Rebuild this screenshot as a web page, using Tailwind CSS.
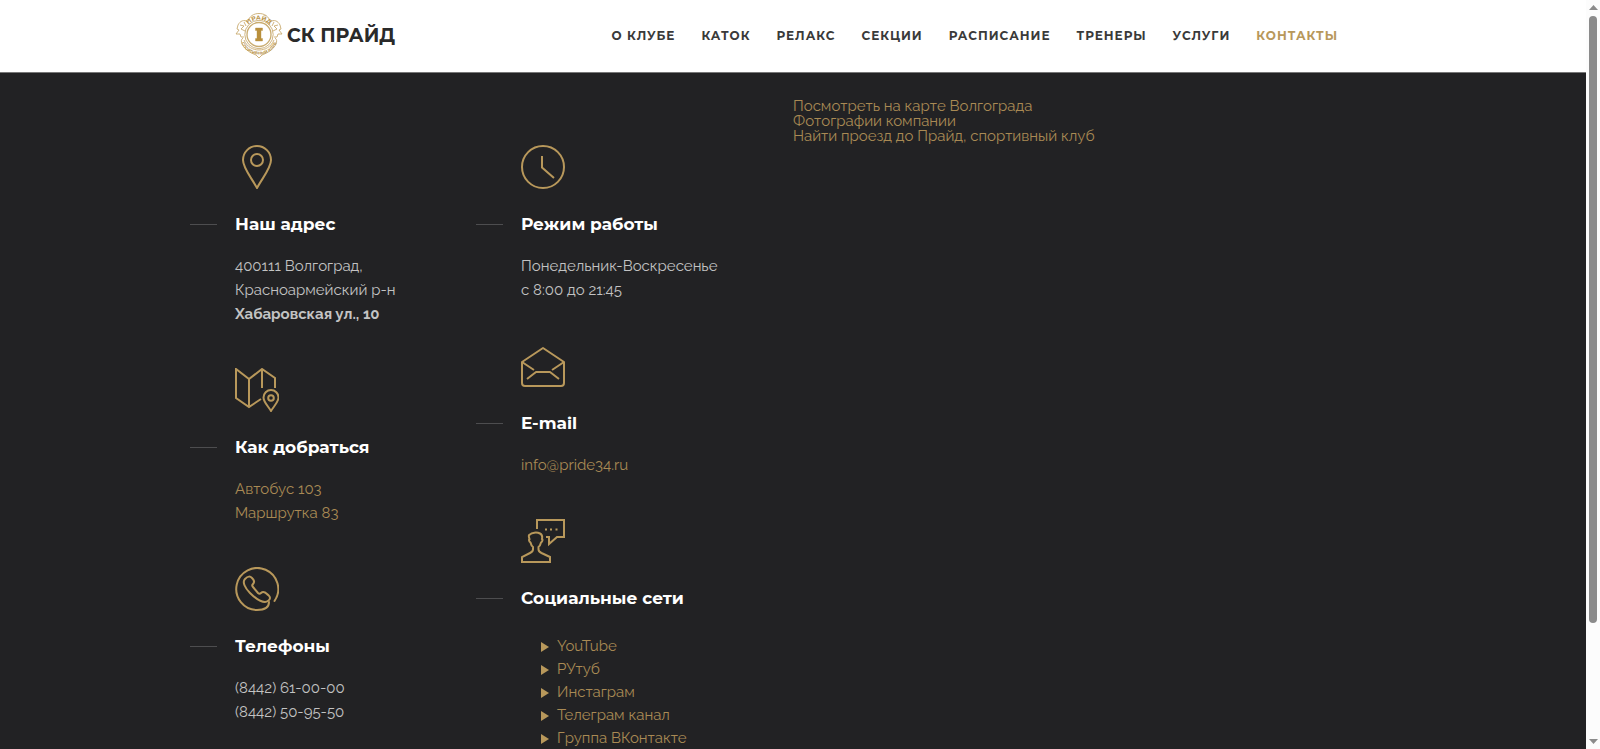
<!DOCTYPE html>
<html lang="ru">
<head>
  <meta charset="UTF-8">
  <meta name="viewport" content="width=device-width, initial-scale=1.0">
  <title>Контакты | СК Прайд</title>
  <script src="https://cdn.jsdelivr.net/npm/@tailwindcss/browser@4"></script>
</head>
<body class="flex h-screen overflow-hidden bg-[#222224] font-['Raleway','Open_Sans',sans-serif] text-[15px] leading-6 text-[#c3c3c3]">

  <div class="min-w-0 flex-1">
    <!-- Header -->
    <header class="border-b border-[#777] bg-white font-['Montserrat','Inter',sans-serif]">
      <div class="mx-auto flex h-[72px] max-w-[1146px] items-center justify-between px-[15px]">
        <a href="#" class="flex items-center gap-1 text-[19px] font-bold text-[#2a2a2a]">
          <svg class="h-12 w-12" viewBox="0 0 48 48" fill="none" stroke="#c9ac70" stroke-width=".9">
            <circle cx="24" cy="22.500" r="14.200"/>
            <circle cx="24" cy="22.500" r="12" stroke-width="1.300"/>
            <path d="M13 10C14 4 19 1.500 24 1.500S34 4 35 10"/>
            <path d="M13 10C9 7 5 9 3 13l-1 4 2 1-3 4 4 0 1 3 3 0M5 13l4 1-3 3 4 2M9 10l2 4M35 10c4-3 8-1 10 3l1 4-2 1 3 4-4 0-1 3-3 0M43 13l-4 1 3 3-4 2M39 10l-2 4"/>
            <path d="M8 26c-2 1-2 4-1 6 3 6 9 9 14 11l3 3 3-3c5-2 11-5 14-11 1-2 1-5-1-6"/>
            <path d="M9 28c3 7 9 10 15 10s12-3 15-10"/>
            <path id="logo-top" d="M12 14.500a14 14 0 0 1 24 0" stroke="none"/>
            <path id="logo-bottom" d="M6.500 31C10 38.500 16 42.500 24 42.500S38 38.500 41.500 31" stroke="none"/>
            <g fill="#b8934a" stroke="none" font-weight="700" text-anchor="middle">
              <text font-size="6"><textPath href="#logo-top" startOffset="50%">ПРАЙД</textPath></text>
              <text font-size="4"><textPath href="#logo-bottom" startOffset="50%">СПОРТИВНЫЙ КЛУБ</textPath></text>
            </g>
            <path d="M20.500 16h7v2.500H26v8h1.500V29h-7v-2.500H22v-8h-1.500z" fill="#b98f3c" stroke="#b98f3c" stroke-width=".4"/>
          </svg>
          <span>СК ПРАЙД</span>
        </a>
        <nav class="flex gap-[26px] pr-[13px] text-[12px] font-bold tracking-[1px] text-[#3a3a3a]">
          <a href="#">О КЛУБЕ</a>
          <a href="#">КАТОК</a>
          <a href="#">РЕЛАКС</a>
          <a href="#">СЕКЦИИ</a>
          <a href="#">РАСПИСАНИЕ</a>
          <a href="#">ТРЕНЕРЫ</a>
          <a href="#">УСЛУГИ</a>
          <a href="#" class="text-[#b8985b]">КОНТАКТЫ</a>
        </nav>
      </div>
    </header>

    <main class="grid grid-cols-2">
      <!-- Contacts -->
      <div class="ml-auto grid w-full max-w-[573px] grid-cols-[1fr_287px] pt-[72px]">
        <div class="flex flex-col gap-[42px] pl-[15px]">
          <section>
            <svg class="h-11 w-11" viewBox="0 0 44 44" fill="none" stroke="#b8985b" stroke-width="2">
              <path d="M22 43C16 32 8 23 8 15a14 14 0 0 1 28 0c0 8-8 17-14 28z"/>
              <circle cx="22" cy="15" r="6"/>
            </svg>
            <h4 class="relative mt-[23px] font-['Montserrat','Inter',sans-serif] text-[17px] font-bold leading-6 text-white before:absolute before:top-3 before:-left-[45px] before:h-px before:w-[27px] before:bg-[#4d4d4f]">Наш адрес</h4>
            <p class="mt-[18px]">400111 Волгоград,<br>Красноармейский р-н<br><b>Хабаровская ул., 10</b></p>
          </section>

          <section>
            <svg class="h-11 w-11" viewBox="0 0 44 44" fill="none" stroke="#b8985b" stroke-width="2">
              <path d="M26 31l-12 8L1 30V1l13 10L27 1l13 9v10M14 11v28M27 1v19"/>
              <path d="M36 43c-3-5-7.500-9-7.500-13.500a7.500 7.500 0 0 1 15 0C43.500 34 39 38 36 43z"/>
              <circle cx="36" cy="30" r="2.800"/>
            </svg>
            <h4 class="relative mt-[23px] font-['Montserrat','Inter',sans-serif] text-[17px] font-bold leading-6 text-white before:absolute before:top-3 before:-left-[45px] before:h-px before:w-[27px] before:bg-[#4d4d4f]">Как добраться</h4>
            <p class="mt-[18px] text-[#a98a54]"><a href="#">Автобус 103</a><br><a href="#">Маршрутка 83</a></p>
          </section>

          <section>
            <svg class="h-11 w-11" viewBox="0 0 44 44" fill="none" stroke="#b8985b" stroke-width="2" stroke-linecap="round" stroke-linejoin="round">
              <path d="M39.500 34A21 21 0 1 0 22 43c7 0 12-1.500 12-8"/>
              <path d="M10 12c-3 3 0 9 5 14s11 9 15 9c2 0 5-2 5-4s-1-2-3-4-4-3-6-1c-1 1-2 1-3 0l-5-6c-1-1-1-2 0-3 2-2 1-4-1-6s-4-2-7 1z"/>
            </svg>
            <h4 class="relative mt-[23px] font-['Montserrat','Inter',sans-serif] text-[17px] font-bold leading-6 text-white before:absolute before:top-3 before:-left-[45px] before:h-px before:w-[27px] before:bg-[#4d4d4f]">Телефоны</h4>
            <p class="mt-[18px]">(8442) 61-00-00<br>(8442) 50-95-50</p>
          </section>
        </div>

        <div class="flex flex-col gap-[42px] pl-[15px]">
          <section>
            <svg class="h-11 w-11" viewBox="0 0 44 44" fill="none" stroke="#b8985b" stroke-width="2">
              <circle cx="22" cy="22" r="21"/>
              <path d="M21 11v11.500L33 33"/>
            </svg>
            <h4 class="relative mt-[23px] font-['Montserrat','Inter',sans-serif] text-[17px] font-bold leading-6 text-white before:absolute before:top-3 before:-left-[45px] before:h-px before:w-[27px] before:bg-[#4d4d4f]">Режим работы</h4>
            <p class="mt-[18px]">Понедельник-Воскресенье<br>с 8:00 до 21:45</p>
          </section>

          <section>
            <svg class="h-11 w-11" viewBox="0 0 44 44" fill="none" stroke="#b8985b" stroke-width="2" stroke-linejoin="round">
              <path d="M1 18L22 4l21 14v21a3 3 0 0 1-3 3H4a3 3 0 0 1-3-3z"/>
              <path d="M1 18l12 8M43 18l-12 8M6 35l9-7h14l9 7"/>
            </svg>
            <h4 class="relative mt-[23px] font-['Montserrat','Inter',sans-serif] text-[17px] font-bold leading-6 text-white before:absolute before:top-3 before:-left-[45px] before:h-px before:w-[27px] before:bg-[#4d4d4f]">E-mail</h4>
            <p class="mt-[18px] text-[#a98a54]"><a href="#">info@pride34.ru</a></p>
          </section>

          <section>
            <svg class="h-11 w-11" viewBox="0 0 44 44" fill="none" stroke="#b8985b" stroke-width="2">
              <path d="M16 10V1h27v17h-7l-8 7v-7h-3"/>
              <path d="M24 10.500h2M29 10.500h2M34.500 10.500h2"/>
              <path d="M1 43v-5l8-4c2-1 3-2 3-3.500V28c-1.500-1-2-2.500-2.500-4.500C8 22.500 7.500 20.500 8.500 20 7.500 17 7.500 16 9 15.500c1.500-2 7-2.500 10-1 2 1 2.500 3 2 5.500 1 .5.500 2.500-1 3.500-.5 2-1 3.500-2.500 4.500v2.500c0 1.500 1 2.500 3 3.500l8.500 4v5z"/>
            </svg>
            <h4 class="relative mt-[23px] font-['Montserrat','Inter',sans-serif] text-[17px] font-bold leading-6 text-white before:absolute before:top-3 before:-left-[45px] before:h-px before:w-[27px] before:bg-[#4d4d4f]">Социальные сети</h4>
            <ul class="mt-[25px] pl-5 leading-[23px] text-[#a98a54]">
              <li class="flex items-center gap-2"><svg class="h-[10px] w-2" viewBox="0 0 8 10" fill="#b8985b"><path d="M0 0l8 5-8 5z"/></svg><a href="#">YouTube</a></li>
              <li class="flex items-center gap-2"><svg class="h-[10px] w-2" viewBox="0 0 8 10" fill="#b8985b"><path d="M0 0l8 5-8 5z"/></svg><a href="#">РУтуб</a></li>
              <li class="flex items-center gap-2"><svg class="h-[10px] w-2" viewBox="0 0 8 10" fill="#b8985b"><path d="M0 0l8 5-8 5z"/></svg><a href="#">Инстаграм</a></li>
              <li class="flex items-center gap-2"><svg class="h-[10px] w-2" viewBox="0 0 8 10" fill="#b8985b"><path d="M0 0l8 5-8 5z"/></svg><a href="#">Телеграм канал</a></li>
              <li class="flex items-center gap-2"><svg class="h-[10px] w-2" viewBox="0 0 8 10" fill="#b8985b"><path d="M0 0l8 5-8 5z"/></svg><a href="#">Группа ВКонтакте</a></li>
            </ul>
          </section>
        </div>
      </div>

      <!-- Map -->
      <div class="flex flex-col items-start pt-[26px] leading-[15px] text-[#a98a54]">
        <a href="#">Посмотреть на карте Волгограда</a>
        <a href="#">Фотографии компании</a>
        <a href="#">Найти проезд до Прайд, спортивный клуб</a>
      </div>
    </main>
  </div>

  <!-- Scrollbar -->
  <div class="flex w-[14px] flex-col items-center bg-[#fcfcfc] pt-[5px] pb-[5px]">
    <svg class="h-[5px] w-[9px]" viewBox="0 0 9 5" fill="#8b8b8b"><path d="M4.500 0L9 5H0z"/></svg>
    <div class="mt-[6px] flex w-2 flex-1 flex-col">
      <div class="h-[84%] rounded-full bg-[#8b8b8b]"></div>
    </div>
    <svg class="h-[5px] w-[9px]" viewBox="0 0 9 5" fill="#8b8b8b"><path d="M0 0h9L4.500 5z"/></svg>
  </div>

</body>
</html>
